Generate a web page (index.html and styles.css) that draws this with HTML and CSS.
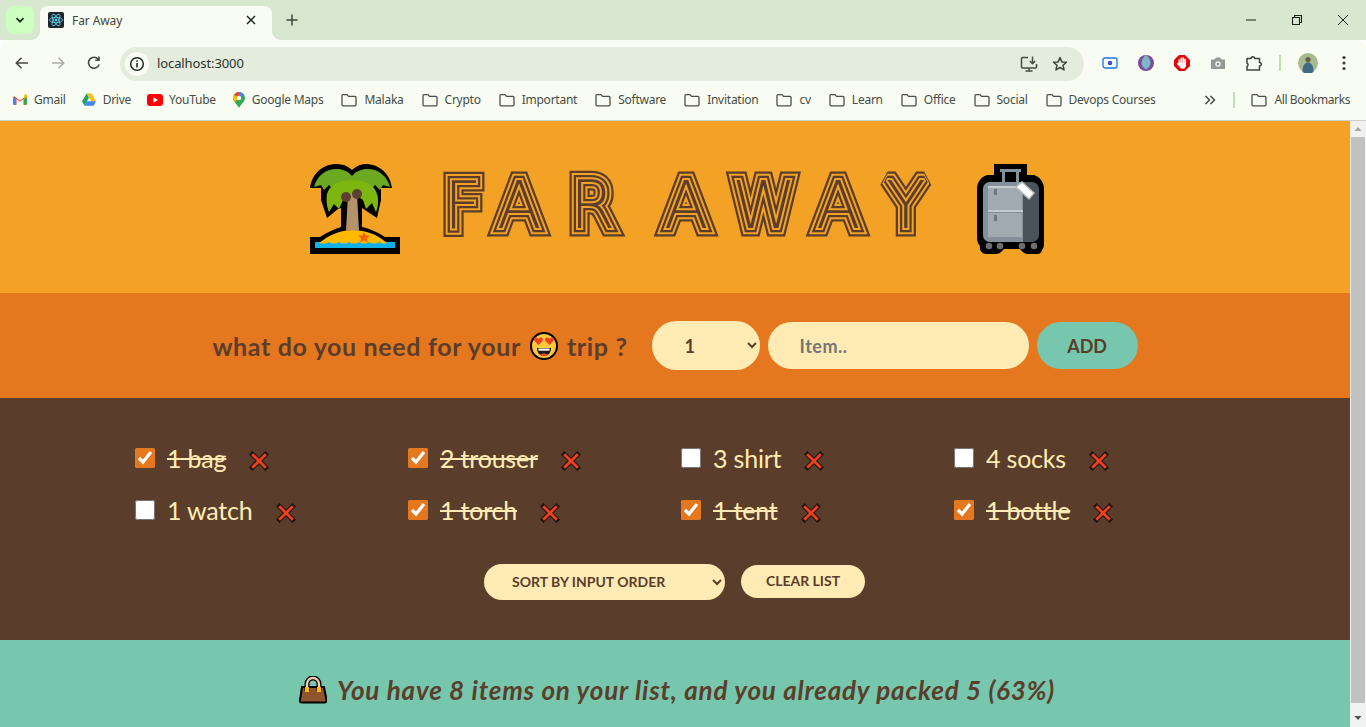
FILE: index.html
```html
<!DOCTYPE html>
<html lang="en">
<head>
<meta charset="utf-8">
<title>Far Away</title>
<link rel="stylesheet" href="styles.css">
</head>
<body>
<svg class="sprites" width="0" height="0" aria-hidden="true">
  <defs>
    <symbol id="folder" viewBox="0 0 16 16"><path d="M1 3.600c0-.6.400-1 1-1h4l1.600 1.800H14c.6 0 1 .4 1 1v7.400c0 .6-.4 1-1 1H2c-.6 0-1-.4-1-1z" fill="none" stroke="#4a4f47" stroke-width="1.300"/></symbol>
    <symbol id="cross" viewBox="0 0 20 20">
      <path d="M3.500 3.500l13 13M16.500 3.500l-13 13" stroke="#1d1410" stroke-width="5" stroke-linecap="square"/>
      <path d="M3.200 3.200l13.600 13.600M16.800 3.200L3.200 16.800" stroke="#f0401c" stroke-width="2.800"/>
    </symbol>
  </defs>
</svg>
<div class="window">
  <div class="tabstrip">
    <button class="tabsearch"><svg viewBox="0 0 12 12" width="12" height="12"><path d="M2.500 4.200L6 7.700l3.500-3.500" fill="none" stroke="#1f2a1d" stroke-width="1.700"/></svg></button>
    <div class="tab">
      <svg class="favicon" viewBox="0 0 16 16" width="16" height="16"><rect width="16" height="16" rx="2" fill="#20232a"/><g fill="none" stroke="#61dafb" stroke-width=".8"><ellipse cx="8" cy="8" rx="6.500" ry="2.600"/><ellipse cx="8" cy="8" rx="6.500" ry="2.600" transform="rotate(60 8 8)"/><ellipse cx="8" cy="8" rx="6.500" ry="2.600" transform="rotate(120 8 8)"/></g><circle cx="8" cy="8" r="1.300" fill="#61dafb"/></svg>
      <span class="tabtitle">Far Away</span>
      <svg class="tabclose" viewBox="0 0 10 10" width="10" height="10"><path d="M1 1l8 8M9 1l-8 8" stroke="#1f2a1d" stroke-width="1.500"/></svg>
    </div>
    <svg class="newtab" viewBox="0 0 12 12" width="12" height="12"><path d="M6 .5v11M.5 6h11" stroke="#3c4439" stroke-width="1.500"/></svg>
    <div class="winctl">
      <svg viewBox="0 0 12 12" width="12" height="12"><path d="M1 6h10" stroke="#1c1f1b" stroke-width="1"/></svg>
      <svg viewBox="0 0 12 12" width="12" height="12"><path d="M1.500 3.500h7v7h-7zM3.500 3.500v-2h7v7h-2" fill="none" stroke="#1c1f1b" stroke-width="1.100"/></svg>
      <svg viewBox="0 0 12 12" width="12" height="12"><path d="M1 1l10 10M11 1L1 11" stroke="#1c1f1b" stroke-width="1"/></svg>
    </div>
  </div>
  <div class="toolbar">
    <div class="nav">
      <svg viewBox="0 0 16 16" width="16" height="16"><path d="M14 8H2.500M7.500 2.800L2.300 8l5.200 5.200" fill="none" stroke="#454c43" stroke-width="1.600"/></svg>
      <svg viewBox="0 0 16 16" width="16" height="16"><path d="M2 8h11.500M8.500 2.800L13.700 8l-5.200 5.200" fill="none" stroke="#a9aea6" stroke-width="1.600"/></svg>
      <svg viewBox="0 0 16 16" width="16" height="16"><path d="M13.200 9.500A5.500 5.500 0 1 1 12.300 4.300M13 1.500v3.800H9.200" fill="none" stroke="#454c43" stroke-width="1.600"/></svg>
    </div>
    <div class="omnibox">
      <span class="siteinfo"><svg viewBox="0 0 16 16" width="16" height="16"><circle cx="8" cy="8" r="6.300" fill="none" stroke="#1f2a1d" stroke-width="1.500"/><path d="M8 7v4.500M8 4.300v1.500" stroke="#1f2a1d" stroke-width="1.600"/></svg></span>
      <span class="url">localhost:3000</span>
      <svg class="omni-ic1" viewBox="0 0 18 18" width="18" height="18"><path d="M8 2.500H2.500a1 1 0 0 0-1 1V12a1 1 0 0 0 1 1h13a1 1 0 0 0 1-1V9M5.500 16h7M9 13v3M12.500 1.500v7M9.800 6l2.700 2.700L15.200 6" fill="none" stroke="#454c43" stroke-width="1.500"/></svg>
      <svg class="omni-ic2" viewBox="0 0 16 16" width="16" height="16"><path d="M8 1.600l1.900 4.300 4.600.4-3.500 3 1.100 4.600L8 11.500l-4.100 2.400L5 9.300l-3.500-3 4.600-.4z" fill="none" stroke="#3c4439" stroke-width="1.500" stroke-linejoin="round"/></svg>
    </div>
    <div class="exts">
      <svg viewBox="0 0 16 16" width="16" height="16"><rect x="1" y="3" width="14" height="10" rx="2" fill="none" stroke="#1a73e8" stroke-width="1.300"/><circle cx="8" cy="8" r="2.300" fill="#4353c9"/></svg>
      <svg viewBox="0 0 16 16" width="16" height="16"><circle cx="8" cy="8" r="8" fill="#7a4a9c"/><path d="M8 0c3 2 4.500 5 4.500 8S10.500 13 8 14.500C5.500 13 3.500 11 3.500 8S5 2 8 0z" fill="#7fb6c6"/></svg>
      <svg viewBox="0 0 16 16" width="16" height="16"><path d="M5 0h6l5 5v6l-5 5H5l-5-5V5z" fill="#e2070d"/><path d="M5.300 5v4M7.300 3.300v5M9.300 3v5M11.200 4.500v5" stroke="#fff" stroke-width="1.700" stroke-linecap="round"/><path d="M4.500 8h7.500v2.500c0 2-1.500 3.200-3.300 3.200-1.600 0-2.400-.8-3.200-2L3.200 9c-.5-.8.500-1.500 1.100-.8z" fill="#fff"/></svg>
      <svg viewBox="0 0 16 16" width="16" height="16"><path d="M1 4.500h3.500L6 2.500h4l1.500 2H15V14H1z" fill="#969896"/><circle cx="8" cy="9" r="2.700" fill="#f8fcf3"/><circle cx="8" cy="9" r="1.500" fill="#969896"/></svg>
      <svg viewBox="0 0 16 16" width="16" height="16"><path d="M1 3.500h4a1.800 1.800 0 0 1 3.600 0h4.900v4a1.800 1.800 0 0 1 0 3.600V15H1v-3.500a2 2 0 0 0 0-3.500z" fill="none" stroke="#3c4439" stroke-width="1.500" stroke-linejoin="round"/></svg>
    </div>
    <span class="vsep"></span>
    <svg class="avatar" viewBox="0 0 20 20" width="20" height="20"><circle cx="10" cy="10" r="10" fill="#a7b98f"/><circle cx="10" cy="6.500" r="2.600" fill="#6c5a4c"/><path d="M4.500 19c0-7 2.500-9.500 5.500-9.500s5.500 2.500 5.500 9.500a10 10 0 0 1-11 0z" fill="#3f6a83"/></svg>
    <svg class="kebab" viewBox="0 0 4 16" width="4" height="16"><circle cx="2" cy="2.500" r="1.600" fill="#3c4439"/><circle cx="2" cy="8" r="1.600" fill="#3c4439"/><circle cx="2" cy="13.500" r="1.600" fill="#3c4439"/></svg>
  </div>
  <div class="bookmarks">
    <span class="bm bm-tight"><svg viewBox="0 0 16 12" width="14" height="11"><path d="M1 12V2l7 5 7-5v10h-3V5.500L8 8.500 4 5.500V12z" fill="#ea4335"/><path d="M0 2.500V11a1 1 0 0 0 1 1h2.500V5.500z" fill="#4285f4"/><path d="M16 2.500V11a1 1 0 0 1-1 1h-2.500V5.500z" fill="#34a853"/><path d="M12.500 5.500L16 3V1.500c0-1.200-1.500-1.800-2.400-1l-1.100.8z" fill="#fbbc04"/></svg>Gmail</span>
    <span class="bm bm-tight"><svg viewBox="0 0 16 14" width="14" height="13"><path d="M5.300 0h5.400L16 9h-5.300z" fill="#fbbc04"/><path d="M5.300 0L0 9l2.700 5L8 5z" fill="#1fa463"/><path d="M2.700 14h10.600L16 9H5.400z" fill="#4285f4"/></svg>Drive</span>
    <span class="bm bm-yt"><svg viewBox="0 0 16 12" width="16" height="12"><rect width="16" height="12" rx="3" fill="#f00"/><path d="M6.400 3.300L11 6l-4.600 2.700z" fill="#fff"/></svg>YouTube</span>
    <span class="bm"><svg viewBox="0 0 12 16" width="12" height="16"><path d="M6 0a6 6 0 0 1 6 6c0 3.500-4 6-6 10C4 12 0 9.500 0 6a6 6 0 0 1 6-6z" fill="#34a853"/><path d="M6 0a6 6 0 0 1 5 2.700L6 6z" fill="#4285f4"/><path d="M1 2.700A6 6 0 0 1 6 0v6z" fill="#ea4335"/><path d="M0 6c0-1.200.4-2.400 1-3.300L6 6 1.600 10C.6 8.800 0 7.500 0 6z" fill="#fbbc04"/><circle cx="6" cy="6" r="2.200" fill="#fff"/></svg>Google Maps</span>
    <span class="bm"><svg width="16" height="16"><use href="#folder"/></svg>Malaka</span>
    <span class="bm"><svg width="16" height="16"><use href="#folder"/></svg>Crypto</span>
    <span class="bm"><svg width="16" height="16"><use href="#folder"/></svg>Important</span>
    <span class="bm"><svg width="16" height="16"><use href="#folder"/></svg>Software</span>
    <span class="bm"><svg width="16" height="16"><use href="#folder"/></svg>Invitation</span>
    <span class="bm"><svg width="16" height="16"><use href="#folder"/></svg>cv</span>
    <span class="bm"><svg width="16" height="16"><use href="#folder"/></svg>Learn</span>
    <span class="bm"><svg width="16" height="16"><use href="#folder"/></svg>Office</span>
    <span class="bm"><svg width="16" height="16"><use href="#folder"/></svg>Social</span>
    <span class="bm"><svg width="16" height="16"><use href="#folder"/></svg>Devops Courses</span>
    <svg class="more" viewBox="0 0 12 10" width="12" height="10"><path d="M1.500 1l4 4-4 4M6.500 1l4 4-4 4" fill="none" stroke="#4a4f47" stroke-width="1.600"/></svg>
    <span class="vsep"></span>
    <span class="bm bm-all"><svg width="16" height="16"><use href="#folder"/></svg>All Bookmarks</span>
  </div>
  <div class="viewport">
    <main class="app">
      <header class="logo">
        <svg class="palm" viewBox="0 0 90 90" width="90" height="90">
          <path d="M0 90V73h10c8-5 14-8 21-10V44l-3 1-11 9-6-18V24H0C2 10 12 0 27 0c6 0 11 2 15 6 4-4 9-6 13-6 15 0 25 10 27 24H71v12l-4 18-15-10v19c9 2 15 5 23 10h15v17z" fill="#000"/>
          <path d="M5 78h80v6H5z" fill="#12b0e8"/>
          <path d="M9 79c10-8 22-13 33-13 14 0 26 5 35 13-3 1-5 1-8-1-3 2-7 2-10 0-3 2-7 2-10 0-3 2-7 2-10 0-3 2-7 2-10 0-3 2-7 2-10 0-3 2-6 2-10 1z" fill="#ffb900"/>
          <path d="M54 68l1.800 3.500h4l-3 3 1 4-3.800-2-3.800 2 1-4-3-3h4z" fill="#f7630c"/>
          <path d="M38 30h9l2 37c-5-1-9-1-13 0z" fill="#b5936a"/>
          <path d="M42 12c-4-5-10-7-15-7C15 5 7 12 4 23l7-2 3 5 5-5 3 3c5-3 12-7 20-7s15 4 20 7l3-3 5 5 3-5 7 2c-3-11-11-18-23-18-5 0-11 2-15 7z" fill="#6aa921"/>
          <path d="M42 16c-12 0-22 4-25 14-1 6 0 14 2 18l5-8 5 5 4-9c3-3 5-5 9-6 4 1 7 3 11 6l3 9 6-6 4 9c2-4 3-12 1-18-3-10-13-14-25-14z" fill="#7eb610"/>
          <circle cx="36" cy="33" r="5" fill="#5c4033"/><circle cx="47" cy="30" r="5" fill="#5c4033"/>
        </svg>
        <h1 class="wordmark">
          <svg viewBox="0 0 496 72" width="496" height="72" role="img">
            <use class="ring r1" href="#farway"/><use class="ring r2" href="#farway"/><use class="ring r3" href="#farway"/><use class="ring r4" href="#farway"/>
            <g class="r5"><text id="farway" x="3 56 129 170 223 291 375 445" y="56">FAR AWAY</text></g>
          </svg>
        </h1>
        <svg class="bag" viewBox="0 0 68 90" width="68" height="90">
          <path d="M17 0h33v11h7c6 2 10 7 10 14v55c0 3-1 5-2 6 0 2-2 4-5 4h-9c-4 0-6-3-8-5H27c-2 2-4 5-8 5H9c-4 0-7-4-6-8-2-2-3-5-3-8V25c0-7 4-12 10-14h7z" fill="#000"/>
          <path d="M23 5h21v3h-2v10h-3V8H28v10h-3V8h-2z" fill="#84919a"/>
          <rect x="6" y="18" width="56" height="60" rx="7" fill="#4a5359"/>
          <path d="M6 25a7 7 0 0 1 7-7h33v60H13a7 7 0 0 1-7-7z" fill="#84919a"/>
          <path d="M11 24h34v22H11zM11 49h34v24H11z" fill="#a0abb1"/><path d="M11 22h35v2H11zM11 46h35v2H11z" fill="#c3cbcf"/>
          <rect x="17" y="25" width="3" height="6" fill="#6d7981"/><rect x="17" y="51" width="3" height="6" fill="#6d7981"/>
          <path d="M39 23l6-5 12 11-5 6z" fill="#fff" stroke="#bcbcbc" stroke-width="1.500"/>
          <circle cx="12" cy="82" r="3.300" fill="#6d6d6d"/><circle cx="23" cy="82" r="3.300" fill="#6d6d6d"/><circle cx="45" cy="82" r="3.300" fill="#6d6d6d"/><circle cx="57" cy="82" r="3.300" fill="#6d6d6d"/>
        </svg>
      </header>
      <form class="add-form">
        <h3 class="prompt">what do you need for your
          <svg class="emoji" viewBox="0 0 28 28" width="28" height="28"><circle cx="14" cy="14" r="13" fill="#ffc83d" stroke="#000" stroke-width="2"/><path d="M7 16h14c0 5-3 8-7 8s-7-3-7-8z" fill="#1b1b1b"/><path d="M8.500 16.500h11v2.200h-11z" fill="#fff"/><path d="M10 23c1-2 7-2 8 0-2 1.500-6 1.500-8 0z" fill="#e8452c"/><path d="M8.500 13L4.500 9C3 7 5.500 4.500 7.500 6l1 1 1-1c2-1.500 4.500 1 3 3zM19.500 13l-4-4c-1.500-2 1-4.500 3-3l1 1 1-1c2-1.500 4.500 1 3 3z" fill="#f0401c"/></svg>
          trip ?</h3>
        <select class="qty"><option>1</option><option>2</option><option>3</option></select>
        <input class="item-input" type="text" placeholder="Item..">
        <button class="add" type="button">ADD</button>
      </form>
      <section class="list">
        <ul class="items">
          <li class="item"><input type="checkbox" checked><span class="label done">1 bag</span><svg class="del" width="20" height="20"><use href="#cross"/></svg></li>
          <li class="item"><input type="checkbox" checked><span class="label done">2 trouser</span><svg class="del" width="20" height="20"><use href="#cross"/></svg></li>
          <li class="item"><input type="checkbox"><span class="label">3 shirt</span><svg class="del" width="20" height="20"><use href="#cross"/></svg></li>
          <li class="item"><input type="checkbox"><span class="label">4 socks</span><svg class="del" width="20" height="20"><use href="#cross"/></svg></li>
          <li class="item"><input type="checkbox"><span class="label">1 watch</span><svg class="del" width="20" height="20"><use href="#cross"/></svg></li>
          <li class="item"><input type="checkbox" checked><span class="label done">1 torch</span><svg class="del" width="20" height="20"><use href="#cross"/></svg></li>
          <li class="item"><input type="checkbox" checked><span class="label done">1 tent</span><svg class="del" width="20" height="20"><use href="#cross"/></svg></li>
          <li class="item"><input type="checkbox" checked><span class="label done">1 bottle</span><svg class="del" width="20" height="20"><use href="#cross"/></svg></li>
        </ul>
        <div class="actions">
          <select class="sort"><option>SORT BY INPUT ORDER</option><option>SORT BY DESCRIPTION</option></select>
          <button class="clear" type="button">CLEAR LIST</button>
        </div>
      </section>
      <footer class="stats">
        <svg class="emoji" viewBox="0 0 28 28" width="28" height="28"><path d="M3 11h22l2.500 13c.2 1.500-.8 2.500-2 2.500H3c-1.500 0-2.500-1-2-2.500z" fill="#8e562e" stroke="#000" stroke-width="2"/><path d="M8 15V8a6 6 0 0 1 12 0v7" fill="none" stroke="#000" stroke-width="5"/><path d="M8 14V8a6 6 0 0 1 12 0v6" fill="none" stroke="#f7cdb0" stroke-width="2.400"/><rect x="6" y="11" width="4" height="5" fill="#ffb900"/><rect x="18" y="11" width="4" height="5" fill="#ffb900"/></svg>
        <em class="stats-text">You have 8 items on your list, and you already packed 5 (63%)</em>
      </footer>
    </main>
    <div class="scrollbar">
      <svg viewBox="0 0 16 16" width="16" height="16"><path d="M4.500 10L8 6l3.500 4z" fill="#a3a3a3"/></svg>
      <div class="sb-thumb"></div>
      <svg class="sb-down" viewBox="0 0 16 16" width="16" height="16"><path d="M4.500 6L8 10l3.500-4z" fill="#505050"/></svg>
    </div>
  </div>
</div>
</body>
</html>
```
FILE: styles.css
```css
* { box-sizing: border-box; }
html, body { margin: 0; height: 727px; overflow: hidden; }
body { font-family: "Noto Sans", sans-serif; color: #3c4439; }
.sprites { position: absolute; }
.window { display: flex; flex-direction: column; height: 727px; width: 1366px; }

/* browser chrome */
.tabstrip { height: 40px; background: #d8e8d0; display: flex; align-items: flex-end; padding-left: 6px; flex: none; }
.tabsearch { width: 28px; height: 28px; margin-bottom: 6px; border: 0; border-radius: 8px; background: #ccffc0; display: flex; align-items: center; justify-content: center; padding: 0; }
.tab { position: relative; width: 232px; height: 34px; margin-left: 6px; background: #f8fcf3; border-radius: 8px 8px 0 0; display: flex; align-items: center; padding: 0 16px 6px 8px; }
.tab::before, .tab::after { content: ""; position: absolute; bottom: 0; width: 8px; height: 8px; }
.tab::before { left: -8px; background: radial-gradient(circle at 0 0, transparent 7.5px, #f8fcf3 8px); }
.tab::after { right: -8px; background: radial-gradient(circle at 100% 0, transparent 7.5px, #f8fcf3 8px); }
.tabtitle { font-size: 12px; margin-left: 8px; flex: 1; color: #3f463c; letter-spacing: -.1px; }
.newtab { margin: 0 0 14px 14px; }
.winctl { margin: 0 0 14px auto; display: flex; gap: 34px; padding-right: 17px; }
.toolbar { height: 41px; flex: none; background: #f8fcf3; border-top-left-radius: 8px; border-top-right-radius: 8px; display: flex; align-items: center; padding-left: 14px; }
.nav { display: flex; gap: 20px; width: 106px; margin-top: 5px; }
.omnibox { width: 964px; height: 34px; margin-top: 6px; background: #e4ecde; border-radius: 17px; display: flex; align-items: center; padding-left: 5px; }
.siteinfo { width: 24px; height: 24px; border-radius: 50%; background: #f8fcf3; display: flex; align-items: center; justify-content: center; }
.url { font-size: 13px; margin: -1px 0 0 8px; color: #2c332a; flex: 1; letter-spacing: -.1px; }
.omni-ic1 { margin-right: 14px; }
.omni-ic2 { margin-right: 16px; }
.exts { display: flex; gap: 20px; margin-left: 18px; margin-top: 5px; }
.toolbar .vsep { margin: 5px 17px 0 17px; }
.vsep { width: 2px; height: 16px; background: #b9e6a8; flex: none; }
.avatar { margin-top: 5px; }
.kebab { margin: 5px 0 0 24px; }
.bookmarks { height: 40px; flex: none; background: #f8fcf3; border-bottom: 1px solid #cdd0ca; display: flex; align-items: center; padding: 0 0 2px 13px; }
.bm { display: flex; align-items: center; gap: 7px; font-size: 12px; letter-spacing: -.25px; color: #474d45; margin-right: 18px; white-space: nowrap; }
.bm-tight { margin-right: 16px; }
.bm-yt { gap: 6px; margin-right: 17px; }
.more { margin-left: 31px; }
.bookmarks .vsep { margin: 0 16px 0 17px; }
.bm-all { margin-right: 0; letter-spacing: -.4px; }

/* page */
.viewport { flex: 1; display: flex; min-height: 0; }
.app { width: 1350px; display: flex; flex-direction: column; font-family: "Lato", sans-serif; color: #5a3e2b; }
.scrollbar { width: 16px; background: #f1f1f1; display: flex; flex-direction: column; }
.sb-thumb { height: 566px; margin: 0 1px; background: #c1c1c1; }
.sb-down { margin-top: auto; margin-bottom: 1px; }
.logo { height: 172px; flex: none; background: #f4a226; display: flex; align-items: center; justify-content: center; padding: 3px 0 0 5px; }
.palm { margin-right: 41px; }
.bag { margin-left: 40px; }
.wordmark { margin: 0 0 2px; height: 72px; line-height: 0; }
.wordmark svg { overflow: visible; }
.wordmark text { font-family: "DejaVu Sans", sans-serif; font-weight: 200; font-size: 65px; }
.ring { fill: none; stroke-linejoin: miter; stroke-miterlimit: 2; }
.r1 { stroke: #5a3e2b; stroke-width: 17px; }
.r2 { stroke: #f4a226; stroke-width: 12.5px; }
.r3 { stroke: #5a3e2b; stroke-width: 8.5px; }
.r4 { stroke: #f4a226; stroke-width: 4px; }
.r5 { fill: #5a3e2b; stroke: none; }
.add-form { height: 105px; flex: none; background: #e5771f; display: flex; align-items: center; justify-content: center; gap: 8px; }
.prompt { margin: 0 16px 0 0; font-size: 25px; font-weight: 700; display: flex; align-items: center; gap: 9px; white-space: nowrap; letter-spacing: .65px; }
.prompt .emoji { flex: none; }
.qty, .item-input, .add { font-family: inherit; font-size: 18px; font-weight: 700; color: #5a3e2b; border: 0; }
.qty { width: 108px; height: 49px; background: #ffebb3; border-radius: 25px; padding: 0 29px; }
.item-input { width: 261px; height: 47px; background: #ffebb3; border-radius: 24px; padding: 0 32px; outline: 0; letter-spacing: .5px; }
.item-input::placeholder { color: #757575; }
.add { width: 101px; height: 47px; background: #76c7ad; border-radius: 24px; }
.list { flex: none; height: 242px; background: #5a3e2b; padding-top: 40px; display: flex; flex-direction: column; align-items: center; color: #ffebb3; }
.items { list-style: none; margin: 0; padding: 0; width: 1080px; display: grid; grid-template-columns: repeat(4, 1fr); gap: 12px; }
.item { height: 40px; display: flex; align-items: center; gap: 12px; font-size: 25px; }
.item input { width: 20px; height: 20px; margin: 0; accent-color: #e5771f; flex: none; }
.label { white-space: nowrap; letter-spacing: -.2px; margin: -1px 11px 0 0; }
.done { text-decoration: line-through; }
.del { flex: none; margin-top: 5px; }
.actions { margin: 34px 1px 0 0; display: flex; align-items: center; gap: 16px; }
.sort, .clear { font-family: inherit; font-size: 14px; font-weight: 700; color: #5a3e2b; border: 0; background: #ffebb3; }
.sort { width: 241px; height: 36px; border-radius: 18px; padding: 0 24px 2px; }
.clear { width: 124px; height: 33px; border-radius: 17px; padding: 0 0 1px; margin-bottom: 2px; }
.stats { flex: 1; background: #76c7ad; display: flex; align-items: center; justify-content: center; gap: 10px; padding: 12px 0 0 4px; font-size: 26px; font-weight: 700; }
.stats-text { letter-spacing: .8px; white-space: nowrap; }
```
